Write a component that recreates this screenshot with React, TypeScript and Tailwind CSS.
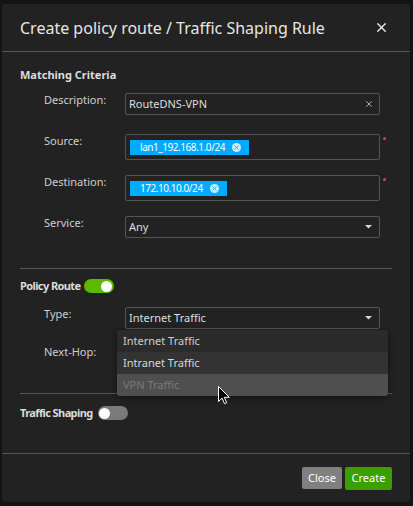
import { X } from "lucide-react";

const font = { fontFamily: '"Noto Sans", "Liberation Sans", sans-serif' };

function Caret() {
  return (
    <svg width="7" height="4" viewBox="0 0 7 4" className="flex-shrink-0">
      <path d="M0 0h7L3.5 3.5z" fill="#d8d8d8" />
    </svg>
  );
}

function Chip({ text }: { text: string }) {
  return (
    <span className="flex items-center gap-[7px] h-[15px] bg-[#00aaff] pl-[10px] pr-[8px] text-[10px] leading-none text-white tracking-[-0.45px]">
      {text}
      <span className="w-[9px] h-[9px] rounded-full bg-[#cdeeff] flex items-center justify-center">
        <X size={7} strokeWidth={3} className="text-[#00aaff]" />
      </span>
    </span>
  );
}

function Toggle({ on }: { on: boolean }) {
  return (
    <span
      className={
        on
          ? "w-[30px] h-[14px] rounded-full bg-[#5cb800] flex items-center justify-end px-[2px]"
          : "w-[30px] h-[14px] rounded-full bg-[#7a7a7a] flex items-center justify-start px-[1px]"
      }
    >
      <span className="w-[11px] h-[11px] rounded-full bg-white" />
    </span>
  );
}

function Row({ label, top, children, req }: { label: string; top: string; children: React.ReactNode; req?: boolean }) {
  return (
    <div className={`flex items-start ${top}`}>
      <span className="w-[81px] ml-[24px] pt-[1px] text-[11px] leading-[12px] text-[#cfcfcf]">{label}</span>
      <div className="w-[255px]">{children}</div>
      {req && <span className="ml-[3px] mt-[3px] w-[3px] h-[3px] rounded-full bg-[#d9414f]" />}
    </div>
  );
}

export default function App() {
  return (
    <div className="w-[413px] h-[506px] bg-[#141414] pt-[4px] pl-[2px]" style={font}>
      <div className="relative w-[408px] h-[498px] bg-[#222222] rounded-[3px] flex flex-col">
        <div className="h-[48px] flex items-center justify-between pl-[18px] pr-[21px] border-b border-[#555]">
          <span className="text-[16px] text-[#e6e6e6]">Create policy route / Traffic Shaping Rule</span>
          <X size={15} strokeWidth={2.2} className="text-[#e6e6e6]" />
        </div>

        <div className="px-[18px] flex-1">
          <div className="pt-[17px] text-[11px] leading-[12px] font-bold text-[#dcdcdc]">Matching Criteria</div>

          <Row label="Description:" top="mt-[12px]">
            <div className="h-[22px] border border-[#555] rounded-[2px] flex items-center justify-between pl-[3px] pr-[5px] text-[11px] text-[#dedede]">
              RouteDNS-VPN
              <X size={10} strokeWidth={2} className="text-[#c8c8c8]" />
            </div>
          </Row>

          <Row label="Source:" top="mt-[19px]" req>
            <div className="h-[26px] border border-[#555] rounded-[2px] flex items-center pl-[4px]">
              <Chip text="lan1_192.168.1.0/24" />
            </div>
          </Row>

          <Row label="Destination:" top="mt-[15px]" req>
            <div className="h-[26px] border border-[#555] rounded-[2px] flex items-center pl-[4px]">
              <Chip text="172.10.10.0/24" />
            </div>
          </Row>

          <Row label="Service:" top="mt-[15px]">
            <div className="h-[22px] border border-[#555] rounded-[2px] flex items-center justify-between pl-[3px] pr-[7px] text-[11px] text-[#dedede]">
              Any
              <Caret />
            </div>
          </Row>

          <div className="mt-[30px] border-t border-[#555]" />

          <div className="mt-[10px] flex items-center gap-[4px] h-[14px]">
            <span className="text-[11px] font-bold text-[#dcdcdc] tracking-[-0.6px]">Policy Route</span>
            <Toggle on />
          </div>

          <Row label="Type:" top="mt-[14px]">
            <div className="relative h-[22px] border border-[#555] rounded-[2px] flex items-center justify-between pl-[3px] pr-[7px] text-[11px] text-[#dedede]">
              Internet Traffic
              <Caret />
              <div className="absolute left-[-9px] top-[22px] w-[271px] rounded-[3px] overflow-hidden shadow-[0_2px_6px_rgba(0,0,0,0.5)] z-10 text-[11px]">
                <div className="h-[22px] bg-[#2b2b2b] flex items-center pl-[6px] text-[#cfcfcf]">Internet Traffic</div>
                <div className="h-[22px] bg-[#333333] flex items-center pl-[6px] text-[#d8d8d8]">Intranet Traffic</div>
                <div className="h-[22px] bg-[#4f4f4f] flex items-center pl-[6px] text-[#7a7a7a]">VPN Traffic</div>
              </div>
            </div>
          </Row>

          <Row label="Next-Hop:" top="mt-[16px]">
            <div className="h-[22px]" />
          </Row>

          <div className="mt-[26px] border-t border-[#555]" />

          <div className="mt-[12px] flex items-center gap-[5px] h-[14px]">
            <span className="text-[11px] font-bold text-[#dcdcdc] tracking-[-0.6px]">Traffic Shaping</span>
            <Toggle on={false} />
          </div>
        </div>

        <div className="h-[49px] border-t border-[#555] flex items-start justify-end gap-[3px] pt-[13px] pr-[18px]">
          <button className="h-[22px] w-[40px] bg-[#808080] rounded-[2px] text-[11px] text-white">Close</button>
          <button className="h-[23px] w-[47px] bg-[#3aa000] rounded-[2px] text-[11px] text-white">Create</button>
        </div>

        <svg className="absolute left-[216px] top-[382px] z-20" width="12" height="19" viewBox="0 0 12 19">
          <path d="M0.5 0.5v15l3.6-3.4 2.4 5.6 2.2-1-2.4-5.4h5z" fill="#000" stroke="#fff" strokeWidth="1" />
        </svg>
      </div>
    </div>
  );
}
